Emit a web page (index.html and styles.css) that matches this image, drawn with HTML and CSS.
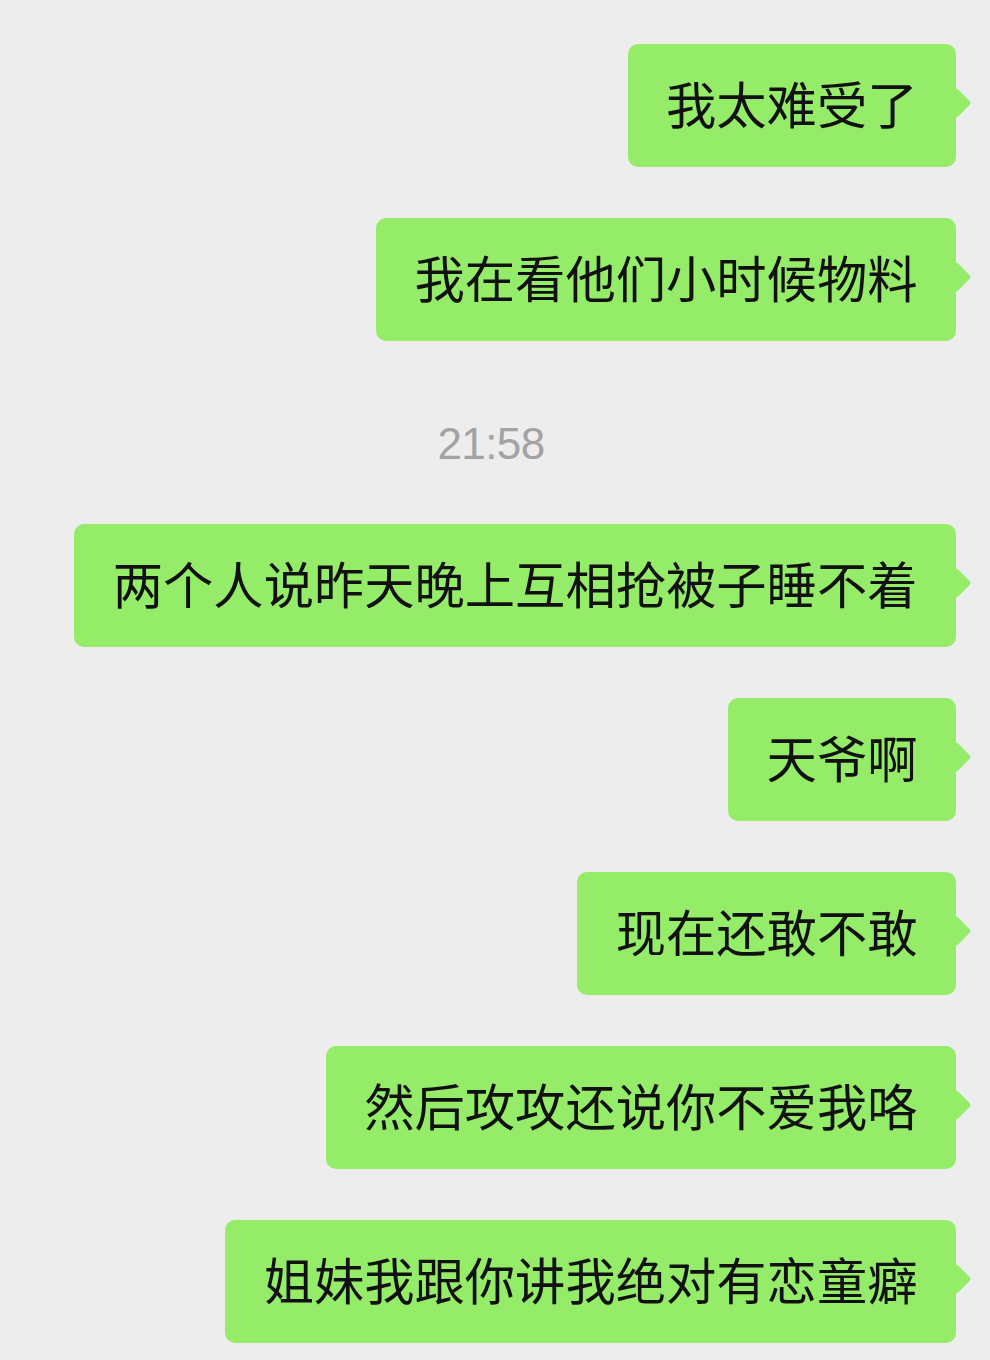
FILE: index.html
```html
<!DOCTYPE html>
<html lang="zh-CN">
<head>
  <meta charset="UTF-8" />
  <meta name="viewport" content="width=device-width, initial-scale=1.0"/>
  <title>聊天</title>
  <link rel="stylesheet" href="styles.css">
</head>
<body>
  <div class="chat">
    <div class="msg">我太难受了</div>
    <div class="msg">我在看他们小时候物料</div>

    <div class="time">21:58</div>

    <div class="msg">两个人说昨天晚上互相抢被子睡不着</div>
    <div class="msg">天爷啊</div>
    <div class="msg">现在还敢不敢</div>
    <div class="msg">然后攻攻还说你不爱我咯</div>
    <div class="msg">姐妹我跟你讲我绝对有恋童癖</div>
  </div>
</body>
</html>
```

FILE: styles.css
```css
body {
  margin: 0;
  background: #ededed;
  font-family: "Noto Sans CJK SC", "Noto Sans", sans-serif;
  min-height: 100vh;
}

.chat {
  display: flex;
  flex-direction: column;
  align-items: flex-end;
  padding: 44px 34px 40px 0;
}

.msg {
  position: relative;
  background: #95ec69;
  color: #111;
  font-size: 50.3px;
  line-height: 51px;
  padding: 33px 38.5px 39px 38.5px;
  border-radius: 10px;
  white-space: nowrap;
}

.msg + .msg {
  margin-top: 51px;
}

/* little tail on the right */
.msg::after {
  content: "";
  position: absolute;
  right: -11px;
  top: 48px;
  width: 22px;
  height: 22px;
  background: #95ec69;
  border-radius: 3px;
  transform: rotate(45deg);
}

.time {
  align-self: stretch;
  margin: 81px -34px 58px 0;
  padding-right: 8px;
  height: 44px;
  line-height: 44px;
  text-align: center;
  font-family: "Liberation Sans", Arial, sans-serif;
  font-size: 44px;
  letter-spacing: -0.6px;
  color: #a3a3a3;
}
```
